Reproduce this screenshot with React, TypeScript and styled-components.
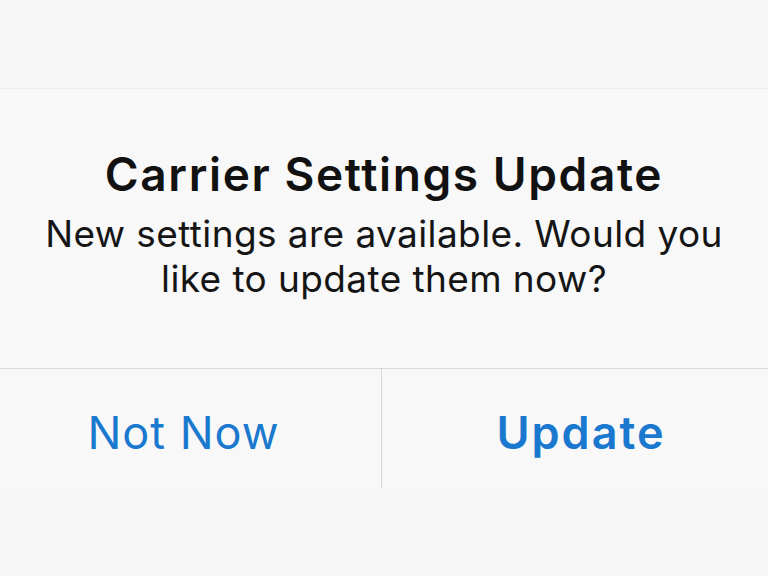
import React from "react";
import styled, { createGlobalStyle } from "styled-components";

const Global = createGlobalStyle`
  html, body { margin: 0; padding: 0; background: #f7f7f7; }
  body { font-family: "Inter", "Noto Sans", "Liberation Sans", sans-serif; }
  * { box-sizing: border-box; }
`;

const Page = styled.div`
  width: 768px;
  height: 576px;
  display: flex;
  flex-direction: column;
  background: #f7f7f7;
  overflow: hidden;
`;

const Panel = styled.div`
  margin-top: 88px;
  display: flex;
  flex-direction: column;
  background: #f8f8f8;
  border-top: 1px solid #ececec;
`;

const Content = styled.div`
  height: 279px;
  display: flex;
  flex-direction: column;
  align-items: center;
  padding-top: 58px;
  text-align: center;
`;

const Title = styled.div`
  font-size: 46px;
  font-weight: 600;
  color: #111;
  line-height: 54px;
  letter-spacing: 1.6px;
`;

const Message = styled.div`
  font-size: 37px;
  font-weight: 400;
  color: #151515;
  line-height: 45px;
  letter-spacing: 0.4px;
  margin-top: 10px;
`;

const Separator = styled.div`
  height: 1px;
  background: #d8d8d8;
`;

const Buttons = styled.div`
  height: 119px;
  display: grid;
  grid-template-columns: 381px 1px 1fr;
`;

const Divider = styled.div`
  background: #d8d8d8;
`;

const Button = styled.div<{ $bold?: boolean }>`
  display: flex;
  align-items: center;
  justify-content: center;
  font-size: 45px;
  font-weight: ${(p) => (p.$bold ? 600 : 400)};
  letter-spacing: ${(p) => (p.$bold ? "2px" : "1px")};
  color: #1a78cf;
  padding-top: 7px;
  padding-left: ${(p) => (p.$bold ? "12px" : "0")};
  padding-right: ${(p) => (p.$bold ? "0" : "14px")};
`;

export default function App() {
  return (
    <Page>
      <Global />
      <Panel>
        <Content>
          <Title>Carrier Settings Update</Title>
          <Message>
            New settings are available. Would you
            <br />
            like to update them now?
          </Message>
        </Content>
        <Separator />
        <Buttons>
          <Button>Not Now</Button>
          <Divider />
          <Button $bold>Update</Button>
        </Buttons>
      </Panel>
    </Page>
  );
}
